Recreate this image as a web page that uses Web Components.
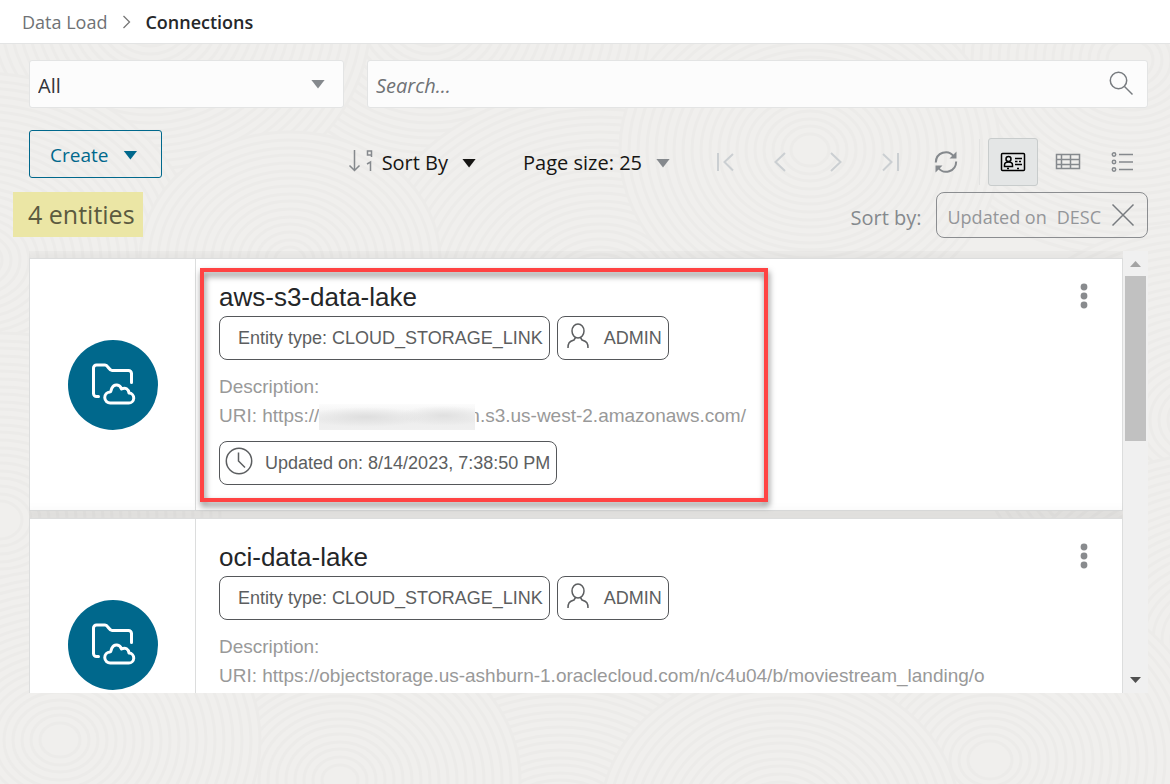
<!DOCTYPE html>
<html lang="en">
<head>
<meta charset="utf-8">
<title>Connections</title>
<style>
html { height: 100%; }
body { margin: 0; min-height: 100%; background: #f0efed; font-family: "Open Sans", "Noto Sans", sans-serif; color: #161513; }
</style>
</head>
<body>
<connections-page></connections-page>

<script>
const define = (name, html, setup) => {
  const template = document.createElement("template");
  template.innerHTML = html;
  customElements.define(name, class extends HTMLElement {
    constructor() {
      super();
      this.attachShadow({ mode: "open" }).append(template.content.cloneNode(true));
    }
    connectedCallback() { if (setup) setup(this.shadowRoot, this); }
  });
};

/* Line icons, each drawn in its own view box */
const ICONS = {
  search: [26, '<circle cx="10.5" cy="10.5" r="8.2"/><path d="M16.5 16.5 24.5 24.5"/>'],
  first: [24, '<path d="M4 3v18M19 4l-8.500 8L19 20.500"/>'],
  prev: [24, '<path d="M16 3 6.500 12 16 21"/>'],
  next: [24, '<path d="M7 3l9.500 9L7 21"/>'],
  last: [24, '<path d="M19 3v18M4 4l8.500 8L4 20.500"/>'],
  refresh: [24, '<path d="M1.800 12.500C2 2.500 14-1.500 20 6.500M22.200 11.500C22 21.500 10 25.500 4 17.500"/><path stroke="none" fill="currentColor" d="M22.500 1.500v7h-7zM1.500 22.500v-7h7z"/>'],
  cards: [26, '<rect x="1.500" y="4.500" width="23" height="17" rx="1"/><circle cx="8.500" cy="10" r="2.500"/><path d="M4.500 17.500v-1.500c0-4 8-4 8 0v1.500zM15 9.500h7M15 12.500h2.500m1.500 0h2M15 15.500h7M7 19.500h2M17 19.500h2"/>'],
  table: [26, '<path d="M1.500 5.500h23v14h-23zM1.500 10.500h23M1.500 15.500h23M6.500 5.500v14M15.500 5.500v14"/>'],
  list: [26, '<circle cx="4" cy="5.500" r="1.700"/><circle cx="4" cy="13" r="1.700"/><circle cx="4" cy="20.500" r="1.700"/><path d="M9 5.500h14M9 13h14M9 20.500h14"/>'],
  close: [24, '<path d="M1.500 1.500l21 21M22.500 1.500l-21 21"/>'],
  sort: [26, '<path d="M6.500 2v20M1.500 17.500l5 5 5-5M23.500 9V3h-4v4h4M19 16l3.500-2v9"/>'],
  crumb: [14, '<path d="M4.500 1 10.500 7l-6 6"/>'],
  user: [26, '<ellipse cx="13" cy="8" rx="6" ry="7"/><path d="M3 25c0-5 1-6.500 6-8l1.500-2.500M23 25c0-5-1-6.500-6-8l-1.500-2.500"/>'],
  clock: [28, '<circle cx="14" cy="14" r="12.700"/><path d="M13.500 5.500V14l6.500 6.500"/>'],
  folder: [46, '<path d="M8.500 34.500H6.500a3 3 0 0 1-3-3V6a3 3 0 0 1 3-3h8.500c3 0 4 5.500 7 5.500h16.500a3 3 0 0 1 3 3v9" stroke-linecap="round"/><path d="M20.500 41a5.500 5.500 0 0 1-.5-11c1.500 0 .5-1.500 2-4 2-4.500 8-4 9.500 1 4-2 7 0 7.500 4a5 5 0 0 1-.5 10z" stroke-linejoin="round"/>'],
  more: [26, '<g fill="currentColor" stroke="none"><circle cx="13" cy="4" r="3.400"/><circle cx="13" cy="13" r="3.400"/><circle cx="13" cy="22" r="3.400"/></g>']
};
customElements.define("line-icon", class extends HTMLElement {
  connectedCallback() {
    const [box, shape] = ICONS[this.getAttribute("name")];
    const weight = this.getAttribute("weight") || "1.5";
    const root = this.shadowRoot || this.attachShadow({ mode: "open" });
    root.innerHTML = `<style>:host{display:block;flex:none;width:${box}px;height:${box}px}svg{display:block;width:100%;height:100%}</style>
      <svg viewBox="0 0 ${box} ${box}" fill="none" stroke="currentColor" stroke-width="${weight}" aria-hidden="true">${shape}</svg>`;
  }
});

define("caret-down", `<style>
  :host { display: block; flex: none; width: 14px; height: 9px; background: currentColor; clip-path: polygon(0 0, 100% 0, 50% 100%); }
</style>`);

/* Faint wood-grain rings behind the page */
define("grain-backdrop", `<style>
  :host { display: block; position: absolute; inset: 0; overflow: hidden; z-index: -1; }
  svg { display: block; width: 100%; height: 100%; }
</style><svg aria-hidden="true" fill="#f0efed" stroke="#ecebe9" stroke-width="3"></svg>`, root => {
  const discs = [[430,20,220],[1130,60,230],[150,20,220],[600,290,240],[-20,260,220],[1200,420,230],[810,150,190],
    [290,260,150],[0,520,220],[560,840,250],[1220,640,220],[990,760,220],[340,780,180],[780,820,180],[60,740,200]];
  let shapes = "";
  for (const [x, y, size] of discs)
    for (let r = size; r > 14; r -= 9)
      shapes += `<ellipse cx="${x}" cy="${y}" rx="${r}" ry="${Math.round(r * .85)}"/>`;
  root.querySelector("svg").innerHTML = shapes;
});

define("bread-crumbs", `<style>
  :host { display: block; background: #fff; border-bottom: 1px solid #e3e4e4; }
  nav { display: flex; align-items: center; height: 43px; padding: 0 22px; font-size: 18px; line-height: 24px; }
  a { color: #6f7275; text-decoration: none; }
  line-icon { margin: 0 12px; color: #777; }
  b { font-weight: 600; color: #26282a; }
</style>
<nav aria-label="Breadcrumb"><a href="#load">Data Load</a><line-icon name="crumb" weight="1.3"></line-icon><b>Connections</b></nav>`);

define("filter-bar", `<style>
  :host { display: grid; grid-template-columns: minmax(200px, 315px) 1fr; gap: 23px; }
  .field { display: grid; align-items: center; height: 48px; box-sizing: border-box; background: #fcfcfc; border: 1px solid #e3e4e4; border-radius: 3px; }
  .field > * { grid-area: 1 / 1; }
  select, input { appearance: none; box-sizing: border-box; width: 100%; height: 46px; margin: 0; padding: 4px 8px 0; border: 0; background: none; font: 20px/28px "Open Sans", sans-serif; color: #33353a; }
  input { padding-top: 2px; }
  input::placeholder { color: #6f7275; font-style: italic; opacity: 1; }
  caret-down, line-icon { justify-self: end; pointer-events: none; color: #85898d; }
  caret-down { margin-right: 18px; }
  line-icon { margin: 0 13px 2px 0; color: #777b7f; }
</style>
<div class="field"><select aria-label="Entity filter"><option>All</option></select><caret-down></caret-down></div>
<div class="field"><input type="search" aria-label="Search" placeholder="Search..."><line-icon name="search"></line-icon></div>`);

define("list-tools", `<style>
  :host { display: flex; justify-content: space-between; align-items: flex-end; }
  button { display: flex; align-items: center; justify-content: center; box-sizing: border-box; margin: 0; padding: 0; border: 0; background: none; font: 20px/28px "Open Sans", sans-serif; color: #161513; white-space: nowrap; }
  .lead { display: flex; flex-direction: column; align-items: flex-start; gap: 14px; padding-bottom: 1px; }
  .create { height: 48px; padding: 2px 24px 0 20px; gap: 15px; border: 1px solid #00688c; border-radius: 3px; color: #00688c; font-size: 19px; }
  .count { margin-left: -16px; padding: 0 8px 0 15px; height: 45px; background: #ebe6a5; color: #5b5a3f; font-size: 25px; line-height: 45px; }
  .side { display: flex; flex-direction: column; align-items: flex-end; gap: 6px; }
  .row { display: flex; align-items: center; }
  .text { gap: 14px; height: 48px; padding-top: 2px; }
  .text line-icon { margin-right: -6px; margin-bottom: 4px; color: #85898d; }
  .size { margin: 0 31px 0 47px; }
  .size caret-down { color: #85898d; }
  .group { display: flex; gap: 5px; }
  .group button { width: 50px; height: 48px; color: #85898d; }
  .group button:disabled { color: #cbcfd2; }
  .group .on { background: #e4e6e6; border: 1px solid #c8cccc; border-radius: 3px; color: #000; }
  .bar { width: 1px; height: 46px; margin: 0 8px; background: #e2e2e1; }
  .sorted { gap: 15px; height: 46px; color: #85898d; font-size: 20px; line-height: 28px; }
  .sorted > span { padding-top: 6px; }
  .tag { display: flex; align-items: center; box-sizing: border-box; height: 46px; padding: 0 12px 0 10px; border: 1px solid #8b8d90; border-radius: 8px; color: #949699; font-size: 18px; }
  .tag span { padding-top: 4px; margin-right: 10px; }
  .tag button { color: #777b7f; }
</style>
<div class="lead">
  <button class="create">Create<caret-down></caret-down></button>
  <div class="count">4 entities</div>
</div>
<div class="side">
  <div class="row">
    <button class="text"><line-icon name="sort"></line-icon>Sort By<caret-down></caret-down></button>
    <button class="text size">Page size: 25<caret-down></caret-down></button>
    <div class="group">
      <button disabled aria-label="First page"><line-icon name="first" weight="2"></line-icon></button>
      <button disabled aria-label="Previous page"><line-icon name="prev" weight="2"></line-icon></button>
      <button disabled aria-label="Next page"><line-icon name="next" weight="2"></line-icon></button>
      <button disabled aria-label="Last page"><line-icon name="last" weight="2"></line-icon></button>
      <button aria-label="Refresh"><line-icon name="refresh" weight="2"></line-icon></button>
    </div>
    <div class="bar"></div>
    <div class="group">
      <button class="on" aria-label="Card view" aria-pressed="true"><line-icon name="cards"></line-icon></button>
      <button aria-label="Table view"><line-icon name="table"></line-icon></button>
      <button aria-label="List view"><line-icon name="list"></line-icon></button>
    </div>
  </div>
  <div class="row sorted"><span>Sort by:</span>
    <div class="tag"><span>Updated on</span><span>DESC</span><button aria-label="Remove sort"><line-icon name="close"></line-icon></button></div>
  </div>
</div>`);

define("info-chip", `<style>
  :host { display: inline-flex; align-items: center; box-sizing: border-box; height: 44px; padding: 0 6px 0 var(--chip-start, 18px); gap: 12px; border: 1px solid #55575a; border-radius: 8px; font-size: 18px; line-height: 24px; color: #5c5e60; white-space: nowrap; }
  ::slotted(line-icon) { margin-bottom: 4px; }
</style><slot name="icon"></slot><slot></slot>`);

define("entity-card", `<style>
  :host { display: flex; position: relative; box-sizing: border-box; height: 253px; border: 1px solid #dcdddd; background: #fff; box-shadow: 0 0 12px 6px rgba(0,0,0,.05); font-family: "Liberation Sans", Arial, sans-serif; }
  .mark { display: grid; place-items: center; flex: none; width: 165px; border-right: 1px solid #dcdddd; }
  .disc { display: grid; place-items: center; width: 90px; height: 90px; border-radius: 50%; background: #00688c; color: #fff; }
  .body { flex: 1; min-width: 0; padding: 21px 0 0 23px; }
  h2 { margin: 0 0 2px; font-size: 26px; font-weight: 400; line-height: 34px; color: #242628; }
  .chips { display: flex; gap: 7px; }
  .detail { margin: 12px 0 11px; font-size: 19px; line-height: 29px; color: #999; white-space: nowrap; }
  .user { --chip-start: 7px; }
  .user line-icon { margin-right: 1px; }
  .time { --chip-start: 5px; }
  button { align-self: flex-start; margin: 24px 25px 0 0; padding: 0; border: 0; background: none; color: #898b8e; }
</style>
<div class="mark"><div class="disc"><line-icon name="folder" weight="3"></line-icon></div></div>
<div class="body">
  <h2></h2>
  <div class="chips"><info-chip>Entity type: CLOUD_STORAGE_LINK</info-chip><info-chip class="user"><line-icon slot="icon" name="user"></line-icon>ADMIN</info-chip></div>
  <div class="detail">Description:<br><slot></slot></div>
  <info-chip class="time"><line-icon slot="icon" name="clock"></line-icon><span class="stamp"></span></info-chip>
</div>
<button aria-label="Actions"><line-icon name="more"></line-icon></button>
<slot name="callout"></slot>`, (root, host) => {
  root.querySelector("h2").textContent = host.getAttribute("label");
  const stamp = host.getAttribute("updated");
  if (stamp) root.querySelector(".stamp").textContent = "Updated on: " + stamp;
  else root.querySelector(".time").remove();
});

define("redacted-text", `<style>
  :host { display: inline-block; position: relative; width: 156px; height: 26px; margin-right: -6px; vertical-align: middle;
    background: radial-gradient(ellipse 60px 10px at 30% 50%, #dedede, transparent), radial-gradient(ellipse 45px 10px at 80% 45%, #e0e0e0, transparent), linear-gradient(#fcfcfc, #ededed 60%, #f0f0f0); }
</style>`);

define("red-callout", `<style>
  :host { display: block; position: absolute; box-sizing: border-box; left: 170px; top: 9px; width: 568px; height: 234px; border: 4px solid #ff4343; filter: drop-shadow(1px 4px 3px rgba(0,0,0,.5)); pointer-events: none; }
</style>`);

define("scroll-track", `<style>
  :host { display: flex; flex-direction: column; align-items: center; box-sizing: border-box; width: 25px; padding: 10px 0; background: #f0f0f0; }
  .up, .down { width: 11px; height: 6px; background: #a3a3a3; clip-path: polygon(50% 0, 100% 100%, 0 100%); }
  .down { margin-top: auto; background: #505050; clip-path: polygon(0 0, 100% 0, 50% 100%); }
  .thumb { width: 21px; height: 165px; margin-top: 9px; background: #c1c1c1; }
</style><div class="up"></div><div class="thumb"></div><div class="down"></div>`);

define("entity-list", `<style>
  :host { display: flex; height: 442px; overflow: hidden; }
  .cards { flex: 1; min-width: 0; display: flex; flex-direction: column; gap: 7px; padding-top: 7px; overflow: hidden; }
  ::slotted(*) { flex: none; }
</style><div class="cards"><slot></slot></div><scroll-track></scroll-track>`);

define("connections-page", `<style>
  :host { display: block; position: relative; min-height: 100vh; z-index: 0; }
  main { padding: 16px 22px 0 29px; }
  filter-bar { margin-bottom: 22px; }
  list-tools { margin-bottom: 13px; }
</style>
<grain-backdrop></grain-backdrop>
<bread-crumbs></bread-crumbs>
<main>
  <filter-bar></filter-bar>
  <list-tools></list-tools>
  <entity-list>
    <entity-card label="aws-s3-data-lake" updated="8/14/2023, 7:38:50 PM">URI: https://<redacted-text></redacted-text>n.s3.us-west-2.amazonaws.com/<red-callout slot="callout"></red-callout></entity-card>
    <entity-card label="oci-data-lake">URI: https://objectstorage.us-ashburn-1.oraclecloud.com/n/c4u04/b/moviestream_landing/o</entity-card>
  </entity-list>
</main>`);
</script>
</body>
</html>
